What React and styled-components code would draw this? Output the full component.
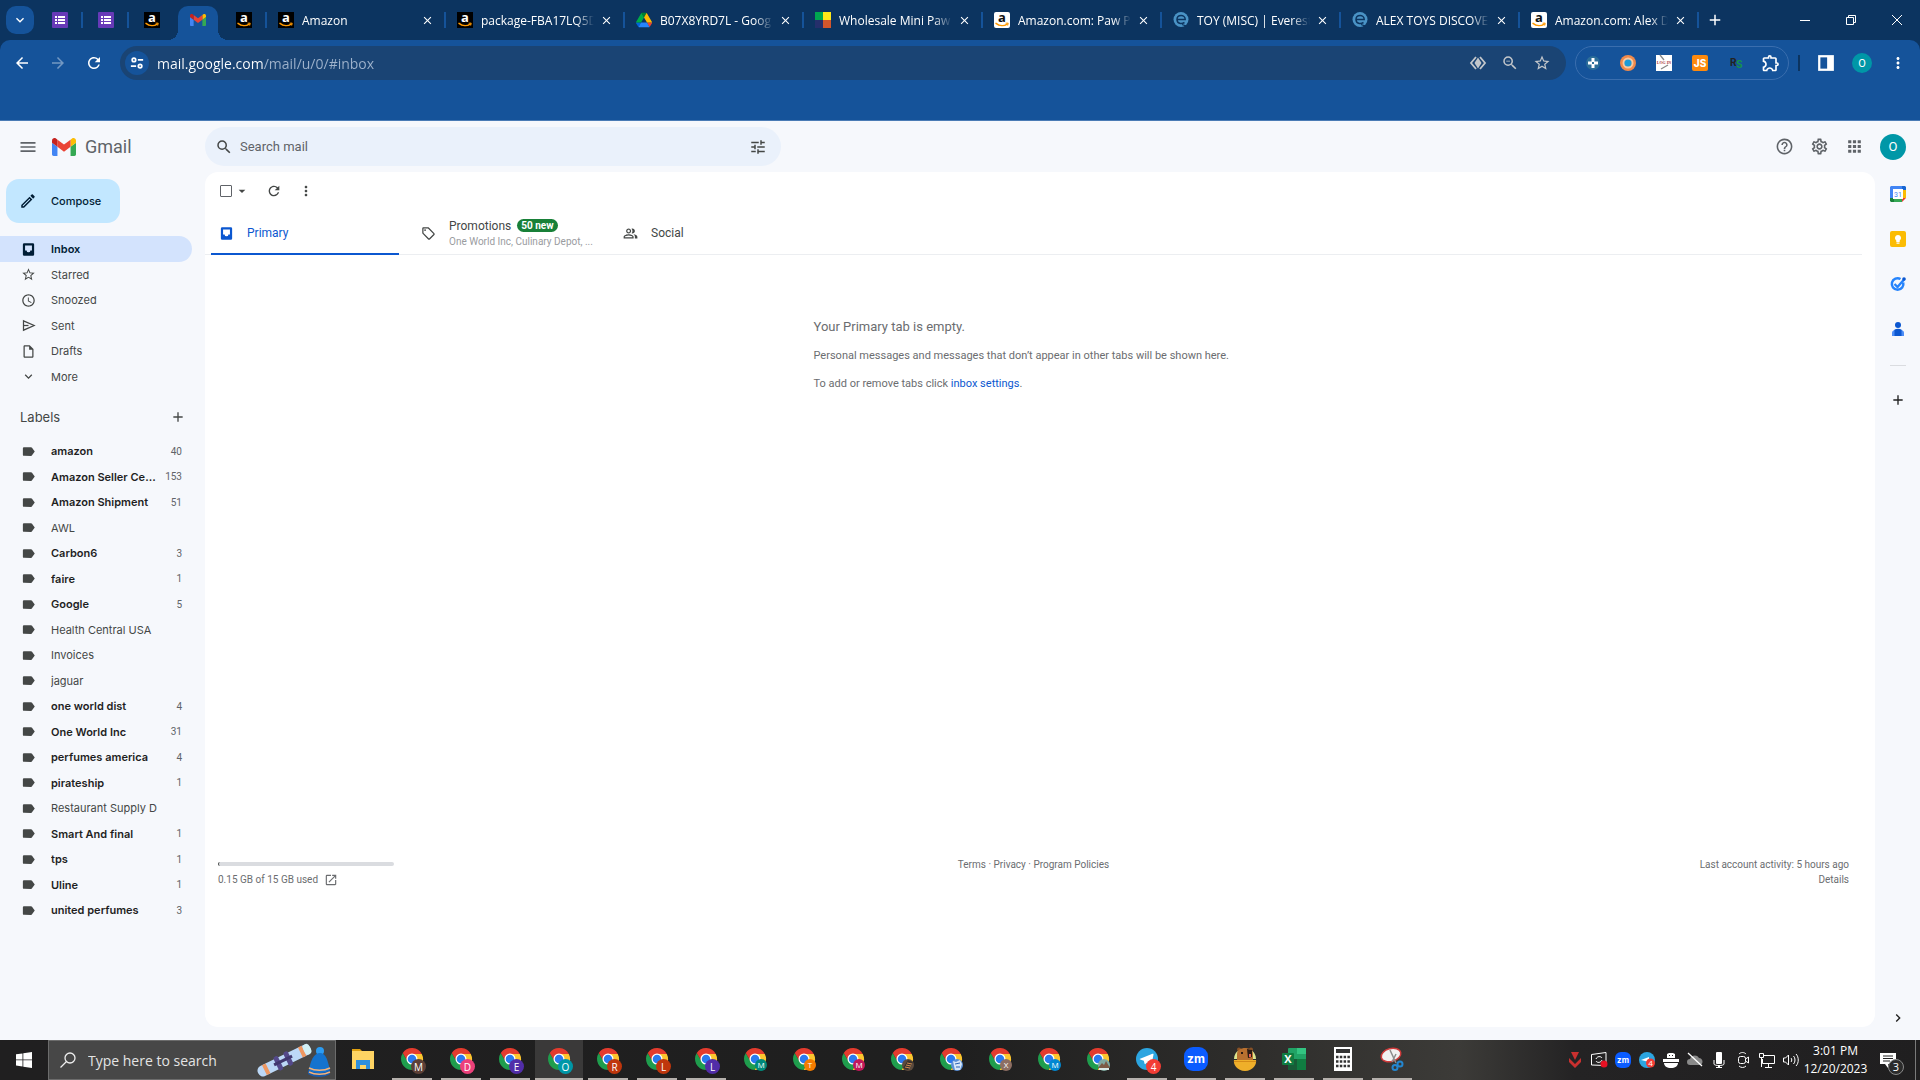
import React from 'react';
import styled, { createGlobalStyle, css } from 'styled-components';
import {
    MdMenu, MdSearch, MdTune, MdHelpOutline, MdOutlineSettings, MdApps, MdOutlineEdit,
    MdStarBorder, MdAccessTime, MdOutlineInsertDriveFile,
    MdExpandMore, MdAdd, MdLabel, MdRefresh, MdMoreVert, MdArrowDropDown, MdOutlineSell,
    MdOutlinePeopleAlt, MdOpenInNew, MdChevronRight, MdArrowBack, MdArrowForward, MdClose,
    MdZoomOut, MdOutlineExtension
} from 'react-icons/md';

const pinnedTabs = [
    { icon: 'forms', label: 'Form', line: true },
    { icon: 'forms', label: 'Form', line: true },
    { icon: 'amazon', label: 'Amazon' },
    { icon: 'gmail', label: 'Gmail', active: true },
    { icon: 'amazon', label: 'Amazon', line: true }
];

const browserTabs = [
    { icon: 'amazon', title: 'Amazon' },
    { icon: 'amazon', title: 'package-FBA17LQ5D' },
    { icon: 'drive', title: 'B07X8YRD7L - Goog' },
    { icon: 'squares', title: 'Wholesale Mini Paw' },
    { icon: 'amazonLight', title: 'Amazon.com: Paw Pa' },
    { icon: 'everest', title: 'TOY (MISC) | Everest' },
    { icon: 'everest', title: 'ALEX TOYS DISCOVE' },
    { icon: 'amazonLight', title: 'Amazon.com: Alex D' }
];

const folders = [
    { icon: <InboxIcon />, name: 'Inbox', active: true },
    { icon: <MdStarBorder />, name: 'Starred' },
    { icon: <MdAccessTime />, name: 'Snoozed' },
    { icon: <SendIcon />, name: 'Sent' },
    { icon: <MdOutlineInsertDriveFile />, name: 'Drafts' },
    { icon: <MdExpandMore />, name: 'More' }
];

const labels = [
    ['amazon', 40], ['Amazon Seller Central', 153], ['Amazon Shipment', 51], ['AWL'],
    ['Carbon6', 3], ['faire', 1], ['Google', 5], ['Health Central USA'], ['Invoices'],
    ['jaguar'], ['one world dist', 4], ['One World Inc', 31], ['perfumes america', 4],
    ['pirateship', 1], ['Restaurant Supply D'], ['Smart And final', 1], ['tps', 1],
    ['Uline', 1], ['united perfumes', 3]
];

const chromeWindows = [
    { letter: 'M', color: '#5d4037', open: true },
    { letter: 'D', color: '#ec407a', open: true },
    { letter: 'E', color: '#512da8', open: true },
    { letter: 'O', color: '#0097a7', open: true, active: true },
    { letter: 'R', color: '#bf360c', open: true },
    { letter: 'L', color: '#bf360c', open: true },
    { letter: 'L', color: '#512da8', open: true },
    { letter: 'M', color: '#00897b' },
    { letter: 'T', color: '#f57c00' },
    { letter: 'M', color: '#c2185b' },
    { picture: 'film', color: '#5b4a3d' },
    { picture: 'robot', color: '#5b8fd6' },
    { letter: 'X', color: '#8d6e63' },
    { letter: 'M', color: '#0288d1' },
    { picture: 'hill', color: '#7fa9a0' }
];

/* ---------- drawings ---------- */

function InboxIcon() {
    return (
        <svg viewBox="0 0 24 24" width="1em" height="1em" fill="currentColor">
            <path fillRule="evenodd" d="M5 2h14a2 2 0 0 1 2 2v16a2 2 0 0 1-2 2H5a2 2 0 0 1-2-2V4a2 2 0 0 1 2-2zM6.500 5.500v8H9a3 3 0 0 0 6 0h2.500v-8z" />
        </svg>
    );
}

function SendIcon() {
    return (
        <svg viewBox="0 0 24 24" width="1em" height="1em" fill="none" stroke="currentColor" strokeWidth="2">
            <path d="M4 4.500L21 12 4 19.500z" />
            <path d="M4 12h8" />
        </svg>
    );
}

function GmailLogo() {
    return (
        <svg viewBox="52 42 88 66">
            <path fill="#4285f4" d="M58 108h14V74L52 59v43c0 3.32 2.69 6 6 6" />
            <path fill="#34a853" d="M120 108h14c3.32 0 6-2.69 6-6V59l-20 15" />
            <path fill="#fbbc04" d="M120 48v26l20-15v-8c0-7.42-8.47-11.65-14.4-7.2" />
            <path fill="#ea4335" d="M72 74V48l24 18 24-18v26L96 92" />
            <path fill="#c5221f" d="M52 51v8l20 15V48l-5.6-4.2c-5.94-4.45-14.4-.22-14.4 7.2" />
        </svg>
    );
}

function AmazonIcon({ light }) {
    return (
        <svg viewBox="0 0 16 16">
            <rect width="16" height="16" rx={light ? 2 : 0} fill={light ? '#fff' : '#000'} />
            <text x="8" y="10" textAnchor="middle" fontFamily="Open Sans, sans-serif" fontWeight="700" fontSize="13" fill={light ? '#111' : '#fff'}>a</text>
            <path d="M2 11.4c3.4 2.7 8 2.9 11.2.7" fill="none" stroke="#f90" strokeWidth="1.5" strokeLinecap="round" />
            <path d="M11.6 11.2l2.6-.1-.5 2.5" fill="none" stroke="#f90" strokeWidth="1" />
        </svg>
    );
}

function Favicon({ name }) {
    switch (name) {
        case 'forms':
            return (
                <svg viewBox="0 0 16 16">
                    <rect width="16" height="16" rx="1" fill="#673ab7" />
                    <path fill="#fff" d="M3 4h2v2H3zM6 4h7v2H6zM3 7h2v2H3zM6 7h7v2H6zM3 10h2v2H3zM6 10h7v2H6z" />
                </svg>
            );
        case 'gmail':
            return <GmailLogo />;
        case 'drive':
            return (
                <svg viewBox="0 0 87 78">
                    <path fill="#0066da" d="M6.6 66.85l3.85 6.65c.8 1.4 1.95 2.5 3.3 3.3L27.5 53H0c0 1.55.4 3.1 1.2 4.5z" />
                    <path fill="#00ac47" d="M43.65 25L29.9 1.2c-1.35.8-2.5 1.9-3.3 3.3L1.2 48.5A9 9 0 0 0 0 53h27.5z" />
                    <path fill="#ea4335" d="M73.55 76.8c1.35-.8 2.5-1.9 3.3-3.3l1.6-2.75L86.1 57.5c.8-1.4 1.2-2.95 1.2-4.5H59.8l5.85 11.5z" />
                    <path fill="#00832d" d="M43.65 25L57.4 1.2C56.05.4 54.5 0 52.9 0H34.4c-1.6 0-3.15.45-4.5 1.2z" />
                    <path fill="#2684fc" d="M59.8 53H27.5L13.75 76.8c1.35.8 2.9 1.2 4.5 1.2h50.8c1.6 0 3.15-.45 4.5-1.2z" />
                    <path fill="#ffba00" d="M73.4 26.5l-12.7-22c-.8-1.4-1.95-2.5-3.3-3.3L43.65 25 59.8 53h27.45c0-1.55-.4-3.1-1.2-4.5z" />
                </svg>
            );
        case 'squares':
            return (
                <svg viewBox="0 0 16 16">
                    <path fill="#00a550" d="M0 0h8v8H0z" />
                    <path fill="#ffe81a" d="M8 0h8v8H8z" />
                    <path fill="#252f6b" d="M0 8h8v8H0z" />
                    <path fill="#d3562c" d="M8 8h8v8H8z" />
                </svg>
            );
        case 'everest':
            return (
                <svg viewBox="0 0 16 16">
                    <circle cx="8" cy="7.500" r="7.500" fill="#4a93c6" />
                    <path d="M4 7.500h8.200c0-5.300-8.200-5.300-8.200 0 0 4.300 4.500 4.800 7.500 3" fill="none" stroke="#0c3460" strokeWidth="1.500" />
                    <path d="M9 12.500l4.500 1.600" stroke="#0c3460" strokeWidth="1.200" />
                </svg>
            );
        default:
            return <AmazonIcon light={name === 'amazonLight'} />;
    }
}

function ChromeLogo() {
    return (
        <svg viewBox="0 0 48 48">
            <path fill="#fcc52e" d="M24 14H43.6A22 22 0 0 1 22.86 45.97L32.66 29Z" />
            <path fill="#1f9d4d" d="M32.66 29L22.86 45.97A22 22 0 0 1 5.54 12.03L15.34 29Z" />
            <path fill="#e33b2e" d="M15.34 29L5.54 12.03A22 22 0 0 1 43.6 14H24Z" />
            <circle cx="24" cy="24" r="11" fill="#fff" />
            <circle cx="24" cy="24" r="8.5" fill="#2a7af0" />
        </svg>
    );
}

function BadgePicture({ name }) {
    if (name === 'film') {
        return (
            <svg viewBox="0 0 12 12">
                <path d="M1 9L6 1l5 2-5 8z" fill="#3a322c" />
                <path d="M3 8l5 1M4 6l5 1M5 4l5 1" stroke="#d08a4e" />
            </svg>
        );
    }
    if (name === 'robot') {
        return (
            <svg viewBox="0 0 12 12">
                <path d="M2 2l3 1 4-2 2 4-2 6H4L3 7z" fill="#d6e6f8" />
                <path d="M4 5l5-1M5 8h4" stroke="#2a62b4" />
            </svg>
        );
    }
    return (
        <svg viewBox="0 0 12 12">
            <path d="M0 9l4-5 2 2 2-4 4 7z" fill="#7c5a44" />
            <path d="M1 10h10" stroke="#d9e8e4" strokeWidth="2" />
        </svg>
    );
}

function TelegramIcon() {
    return (
        <svg viewBox="0 0 24 24">
            <circle cx="12" cy="12" r="11" fill="#2ca5e0" />
            <path fill="#fff" d="M4.5 12l13-5.2c.8-.3 1.2.2 1 1l-2 9.4c-.2.9-.8 1-1.5.6l-3-2.3-1.6 1.5c-.4.4-.7.2-.8-.3l-.8-3-3.5-1.1z" />
        </svg>
    );
}

function ZoomIcon() {
    return (
        <svg viewBox="0 0 24 24">
            <rect width="24" height="24" rx="9" fill="#0b5cff" />
            <text x="12" y="16" textAnchor="middle" fontFamily="Inter, sans-serif" fontWeight="700" fontSize="12" fill="#fff">zm</text>
        </svg>
    );
}

function BearIcon() {
    return (
        <svg viewBox="0 0 24 24">
            <path d="M1 12c0-4 2-7 4-8h14c2 1 4 4 4 8z" fill="#dde68f" />
            <circle cx="6" cy="2.500" r="2" fill="#8a5226" />
            <circle cx="18" cy="2.500" r="2" fill="#8a5226" />
            <path d="M4 14V7c0-8 16-8 16 0v7z" fill="#b8702f" />
            <path d="M8 5h2v2H8z" fill="#2b1a14" />
            <path d="M14 2l5 1v7l-4 1z" fill="#2b1a14" />
            <path d="M16 7h2v3h-2z" fill="#e8625a" />
            <path d="M1 13h22c1 4-3 11-11 11S0 17 1 13z" fill="#efaf2a" />
            <path d="M1 14.500h22" stroke="#d58b18" />
        </svg>
    );
}

function FolderIcon() {
    return (
        <svg viewBox="0 0 24 24">
            <path d="M1 2h8l2 2H1z" fill="#e0a010" />
            <path d="M1 4h22v18H1z" fill="#ffd463" />
            <path d="M5 13h14v9h-4v-4H9v4H5z" fill="#2f8fdc" />
        </svg>
    );
}

function ExcelIcon() {
    return (
        <svg viewBox="0 0 24 24">
            <rect x="6" y="1" width="18" height="22" rx="1" fill="#21a366" />
            <path d="M6 12h9v11H6z" fill="#185c37" />
            <path d="M15 1h9v6h-9z" fill="#33c481" />
            <path d="M15 12h9v11h-9z" fill="#107c41" />
            <rect y="6" width="12" height="12" rx="1" fill="#107c41" />
            <text x="6" y="16" textAnchor="middle" fontFamily="Open Sans, sans-serif" fontWeight="700" fontSize="11" fill="#fff">X</text>
        </svg>
    );
}

function CalculatorIcon() {
    return (
        <svg viewBox="0 0 24 24">
            <path d="M3 0h18v24H3z" fill="#fff" />
            <path d="M5 2h14v4H5z" fill="#333" />
            <path d="M5 10h14M5 14.500h14M5 19h14" stroke="#333" strokeWidth="2.500" strokeDasharray="2.500 1.300" />
        </svg>
    );
}

function SnipIcon() {
    return (
        <svg viewBox="0 0 24 24">
            <ellipse cx="11" cy="8" rx="10" ry="6.500" fill="#f1f1f1" stroke="#cf3b3b" strokeWidth="1.500" transform="rotate(-15 11 8)" />
            <path d="M10 3l6 13M16 7l-4 8" stroke="#8c8c8c" strokeWidth="1.500" />
            <circle cx="20" cy="17" r="2.500" fill="none" stroke="#2486cf" strokeWidth="2" />
            <circle cx="15" cy="20.500" r="2.500" fill="none" stroke="#2486cf" strokeWidth="2" />
        </svg>
    );
}

function SnowArt() {
    return (
        <svg viewBox="0 0 74 36">
            <g transform="rotate(-26 27 18)">
                <rect x="-2" y="13" width="58" height="11" rx="5" fill="#bcd8f7" />
                <path d="M5 13h4v11H5zM45 13h4v11h-4z" fill="#ee9862" />
                <rect x="49" y="13" width="7" height="11" rx="4" fill="#d3f0f5" />
                <rect x="18" y="11" width="5" height="15" rx="2" fill="#54498a" />
                <rect x="29" y="11" width="5" height="15" rx="2" fill="#54498a" />
                <path d="M16 18h20" stroke="#41386f" strokeWidth="3" />
            </g>
            <circle cx="63" cy="9" r="4" fill="#2c9cf2" />
            <path d="M52 29c1-10 5-18 11-18s8 8 10 18c-6 4-15 4-21 0z" fill="#1473ce" />
            <path d="M51 28c6 4 16 4 22 0v4c-6 4-16 4-22 0z" fill="#1a5aa8" />
            <path d="M52 26c6 3 15 3 21 0M52 30c6 3 15 3 21 0" stroke="#f3b27a" strokeWidth="1.500" fill="none" />
        </svg>
    );
}

function CalendarIcon() {
    return (
        <svg viewBox="0 0 16 16">
            <path d="M1 0h11v4H4v8H0V1z" fill="#4285f4" />
            <path d="M12 0h3l1 1v3h-4z" fill="#1967d2" />
            <path d="M12 4h4v8h-4z" fill="#fbbc04" />
            <path d="M4 12h8v4H4z" fill="#34a853" />
            <path d="M0 12h4v4H1l-1-1z" fill="#188038" />
            <path d="M12 12h4l-4 4z" fill="#ea4335" />
            <path d="M3 3h10v10H3z" fill="#fff" />
            <text x="8" y="11" textAnchor="middle" fontFamily="Roboto, sans-serif" fontSize="7" fill="#4285f4">31</text>
        </svg>
    );
}

function KeepIcon() {
    return (
        <svg viewBox="0 0 16 16">
            <rect width="16" height="16" rx="2" fill="#fbbc04" />
            <path d="M8 4a3 3 0 0 0-1.700 5.500V11h3.400V9.500A3 3 0 0 0 8 4zM6.500 11.500h3v1.200h-3z" fill="#fff" />
        </svg>
    );
}

function TasksIcon() {
    return (
        <svg viewBox="0 0 16 16" fill="none">
            <path d="M13.200 6.500A5.800 5.800 0 1 1 10.500 3" stroke="#2684fc" strokeWidth="2.500" />
            <path d="M4.500 8l3 3 7-8" stroke="#2684fc" strokeWidth="2.400" />
            <circle cx="14" cy="3" r="1.800" fill="#0b57d0" />
        </svg>
    );
}

function ContactsIcon() {
    return (
        <svg viewBox="0 0 16 16">
            <circle cx="8" cy="4" r="3" fill="#0b57d0" />
            <path d="M2 15v-3c0-5 12-5 12 0v3z" fill="#4c8df6" />
            <path d="M4.500 15V8.700c2-1.300 5-1.300 7 0V15z" fill="#0b57d0" />
        </svg>
    );
}

/* ---------- parts ---------- */

function BrowserTabs() {
    return (
        <TabStrip>
            <TabSearch aria-label="Search tabs"><MdExpandMore /></TabSearch>
            {pinnedTabs.map((tab, i) => (
                <PinnedTab key={i} $active={tab.active} $line={tab.line} aria-label={tab.label}>
                    <Favicon name={tab.icon} />
                </PinnedTab>
            ))}
            {browserTabs.map((tab) => (
                <BrowserTab key={tab.title}>
                    <TabTitle><Favicon name={tab.icon} /><span>{tab.title}</span></TabTitle>
                    <TabClose aria-label="Close tab"><MdClose /></TabClose>
                </BrowserTab>
            ))}
            <NewTab aria-label="New tab"><MdAdd /></NewTab>
            <WindowControls>
                <button aria-label="Minimize"><svg viewBox="0 0 10 10"><path d="M0 5.500h10" /></svg></button>
                <button aria-label="Restore"><svg viewBox="0 0 10 10"><path d="M.5 2.500h7v7h-7zM2.500 2.500v-2h7v7h-2" /></svg></button>
                <button aria-label="Close"><svg viewBox="0 0 10 10"><path d="M0 0l10 10M10 0L0 10" /></svg></button>
            </WindowControls>
        </TabStrip>
    );
}

function AddressBar() {
    return (
        <ToolbarArea>
            <Toolbar>
                <NavButton aria-label="Back"><MdArrowBack /></NavButton>
                <NavButton aria-label="Forward" $dim><MdArrowForward /></NavButton>
                <NavButton aria-label="Reload"><MdRefresh /></NavButton>
                <Omnibox>
                    <SiteInfo aria-label="Site information">
                        <svg viewBox="0 0 16 16">
                            <circle cx="4.500" cy="4.500" r="2" /><path d="M9 4.500h6M1 11.500h6" /><circle cx="11.500" cy="11.500" r="2" />
                        </svg>
                    </SiteInfo>
                    <Url aria-label="Address" defaultValue="mail.google.com/mail/u/0/#inbox" />
                    <OmniButton aria-label="Install">
                        <svg viewBox="0 0 18 18">
                            <path d="M9 3.500l3.500 5.500L9 14.500 5.500 9z" fill="currentColor" />
                            <path d="M7 3L2 9l5 6M11 3l5 6-5 6" fill="none" stroke="currentColor" strokeWidth="1.800" />
                        </svg>
                    </OmniButton>
                    <OmniButton aria-label="Zoom"><MdZoomOut /></OmniButton>
                    <OmniButton aria-label="Bookmark"><MdStarBorder /></OmniButton>
                </Omnibox>
                <Extensions>
                    <button aria-label="Extension">
                        <svg viewBox="0 0 16 16"><circle cx="8" cy="8" r="7" fill="#2c6e99" /><path d="M6.500 3h3v3.500H13v3H9.500V13h-3V9.500H3v-3h3.500z" fill="#fff" /><path d="M7 7h2v2H7z" fill="#2c6e99" /></svg>
                    </button>
                    <button aria-label="Extension">
                        <svg viewBox="0 0 16 16"><circle cx="8" cy="8" r="8" fill="#f08a4b" /><circle cx="8" cy="8" r="5.500" fill="#f9c9a0" /><circle cx="8" cy="8" r="3.600" fill="#1c9bd8" /></svg>
                    </button>
                    <button aria-label="Log in">
                        <svg viewBox="0 0 16 16"><rect width="16" height="16" fill="#fff" /><path d="M4 0l4 5M5 14l7-4" stroke="#888" strokeWidth="1.300" /><text x="8" y="9" textAnchor="middle" fontFamily="Liberation Serif, serif" fontWeight="700" fontSize="4" fill="#a33">LOG IN</text></svg>
                    </button>
                    <button aria-label="JS">
                        <svg viewBox="0 0 16 16"><rect width="16" height="16" rx="2" fill="#ff8a0c" /><text x="8" y="12" textAnchor="middle" fontFamily="Inter, sans-serif" fontWeight="800" fontSize="10" fill="#fff">JS</text></svg>
                    </button>
                    <button aria-label="RS">
                        <svg viewBox="0 0 16 16" fontFamily="Inter, sans-serif" fontWeight="700" fontSize="10"><text x="2" y="11" fill="#222">R</text><text x="8" y="13" fill="#16924a">S</text></svg>
                    </button>
                    <button aria-label="Extensions"><MdOutlineExtension /></button>
                </Extensions>
                <ToolbarLine />
                <ProfileTools>
                    <button aria-label="Side panel">
                        <svg viewBox="0 0 16 16"><rect x="2" y="2" width="12" height="12" fill="none" stroke="#fff" strokeWidth="2" /><path d="M9 2h5v12H9z" fill="#fff" /></svg>
                    </button>
                    <Avatar $size={20}>O</Avatar>
                    <button aria-label="Menu"><MdMoreVert /></button>
                </ProfileTools>
            </Toolbar>
        </ToolbarArea>
    );
}

function Sidebar() {
    return (
        <Side>
            <Compose><MdOutlineEdit />Compose</Compose>
            <NavList>
                {folders.map((folder) => (
                    <NavItem key={folder.name}>
                        <NavLink href="#" $active={folder.active}>{folder.icon}<span>{folder.name}</span></NavLink>
                    </NavItem>
                ))}
            </NavList>
            <LabelsHead>
                <h2>Labels</h2>
                <button aria-label="Create new label"><MdAdd /></button>
            </LabelsHead>
            <NavList>
                {labels.map(([name, count]) => (
                    <NavItem key={name}>
                        <NavLink href="#" $bold={count > 0}><MdLabel /><span>{name}</span>{count && <small>{count}</small>}</NavLink>
                    </NavItem>
                ))}
            </NavList>
        </Side>
    );
}

function Mailbox() {
    return (
        <Panel>
            <Actions>
                <CheckInput type="checkbox" aria-label="Select" />
                <button aria-label="Select options"><MdArrowDropDown /></button>
                <button aria-label="Refresh"><MdRefresh /></button>
                <button aria-label="More"><MdMoreVert /></button>
            </Actions>
            <InboxTabs>
                <InboxTab $active><InboxIcon /><div>Primary</div></InboxTab>
                <InboxTab>
                    <MdOutlineSell />
                    <div>
                        <TabName>Promotions<NewBadge>50 new</NewBadge></TabName>
                        <Senders>One World Inc, Culinary Depot, ...</Senders>
                    </div>
                </InboxTab>
                <InboxTab><MdOutlinePeopleAlt /><div>Social</div></InboxTab>
            </InboxTabs>
            <Empty>
                <div>
                    <h1>Your Primary tab is empty.</h1>
                    <p>Personal messages and messages that don’t appear in other tabs will be shown here.</p>
                    <p>To add or remove tabs click <a href="#">inbox settings</a>.</p>
                </div>
            </Empty>
            <Footer>
                <div>
                    <Storage />
                    <StorageText>0.15 GB of 15 GB used<MdOpenInNew /></StorageText>
                </div>
                <Policies><a href="#">Terms</a> · <a href="#">Privacy</a> · <a href="#">Program Policies</a></Policies>
                <Activity>Last account activity: 5 hours ago<br /><a href="#">Details</a></Activity>
            </Footer>
        </Panel>
    );
}

function Taskbar() {
    return (
        <Bar>
            <StartButton aria-label="Start">
                <svg viewBox="0 0 16 16"><path fill="#fff" d="M0 2.300l6.500-.9v6.100H0zM7.300 1.300L16 0v7.500H7.300zM0 8.300h6.500v6.200L0 13.600zM7.300 8.300H16V16l-8.700-1.300z" /></svg>
            </StartButton>
            <TaskSearch>
                <svg viewBox="0 0 16 16" fill="none" stroke="#eee" strokeWidth="1.300"><circle cx="10" cy="6" r="5" /><path d="M6.500 9.500L.5 15.500" /></svg>
                <input placeholder="Type here to search" aria-label="Type here to search" />
                <SnowArt />
            </TaskSearch>
            <Apps>
                <App24 aria-label="File Explorer"><FolderIcon /></App24>
                {chromeWindows.map((win, i) => (
                    <App24 key={i} $open={win.open} $active={win.active} aria-label="Google Chrome">
                        <ChromeLogo />
                        <AppBadge $color={win.color} $big={win.open}>{win.letter || <BadgePicture name={win.picture} />}</AppBadge>
                    </App24>
                ))}
                <App24 $open aria-label="Telegram"><TelegramIcon /><AppBadge $color="#f23c34" $big>4</AppBadge></App24>
                <App24 $open aria-label="Zoom"><ZoomIcon /></App24>
                <App24 $open aria-label="Bear"><BearIcon /></App24>
                <App24 $open aria-label="Excel"><ExcelIcon /></App24>
                <App24 $open aria-label="Calculator"><CalculatorIcon /></App24>
                <App24 $open aria-label="Snipping Tool"><SnipIcon /></App24>
            </Apps>
            <Tray>
                <button aria-label="V"><svg viewBox="0 0 16 16" fill="#c9302f"><path d="M4 0h8L8 8z" /><path d="M2 6l6 6 6-6v4l-6 6-6-6z" /></svg></button>
                <button aria-label="Screen">
                    <svg viewBox="0 0 16 16" fill="none" stroke="#fff"><path d="M.5 2.500L15 .500v13L.5 13z" /><path d="M5 7c1-3 5-3 6-1M11 8c-1 3-5 3-6 1" /><circle cx="13" cy="12" r="3.500" fill="#e81123" stroke="none" /></svg>
                </button>
                <button aria-label="Zoom"><ZoomIcon /></button>
                <button aria-label="Telegram">
                    <svg viewBox="0 0 16 16"><circle cx="8" cy="8" r="8" fill="#2ca5e0" /><path d="M2 8l8-3v5z" fill="#fff" /><circle cx="11.500" cy="11" r="4.500" fill="#f23c34" /><text x="11.500" y="14" textAnchor="middle" fontFamily="Open Sans, sans-serif" fontSize="8" fill="#fff">4</text></svg>
                </button>
                <button aria-label="Bear">
                    <svg viewBox="0 0 16 16" fill="#fff"><path d="M4 6V2l2-1h4l2 1v4z" /><path d="M0 7h16v3H0zM1 11h14c0 3-3 5-7 5s-7-2-7-5z" /><path d="M6 3h1v1H6zM9 3h1v1H9z" fill="#222" /></svg>
                </button>
                <button aria-label="OneDrive"><svg viewBox="0 0 16 16"><path d="M3 13a3 3 0 0 1 0-6c1-4 7-5 9-1 4 0 5 6 1 7z" fill="#8a8a8a" /><path d="M1 1l14 13" stroke="#fff" strokeWidth="1.300" /></svg></button>
                <button aria-label="Microphone"><svg viewBox="0 0 16 16" fill="#fff"><rect x="5" width="6" height="12" rx="1" /><path d="M3 8v4c0 2 10 2 10 0V8" fill="none" stroke="#fff" /><path d="M7 13h2v2h2v1H5v-1h2z" /></svg></button>
                <button aria-label="Meet Now"><svg viewBox="0 0 16 16" fill="none" stroke="#fff"><rect x="3.500" y="4.500" width="7" height="7" rx="2" /><path d="M10.500 7l3-2v6l-3-2M4 2c2-2 5-2 7 0M4 14c2 2 5 2 7 0" /></svg></button>
                <button aria-label="Network"><svg viewBox="0 0 16 16" fill="none" stroke="#fff"><path d="M5 3.500h10.500v8H3.500V7M9.500 12v3M6 15.500h7M.5 1.500h4v4h-4zM2.500 6v9" /></svg></button>
                <button aria-label="Volume"><svg viewBox="0 0 16 16" fill="none" stroke="#fff"><path d="M.5 6h2l3-3v10l-3-3h-2zM8 6c1 1 1 3 0 4M10.500 4c2 2 2 6 0 8M13 2c3 3 3 9 0 12" /></svg></button>
            </Tray>
            <Clock><time>3:01 PM</time><time>12/20/2023</time></Clock>
            <Notices aria-label="Notifications">
                <svg viewBox="0 0 16 16"><path d="M0 1h16v11H8v4l-3-4H0z" fill="#fff" /><path d="M3 4h10M3 6.500h10M3 9h7" stroke="#222" /></svg>
                <NoticeCount>3</NoticeCount>
            </Notices>
        </Bar>
    );
}

function App() {
    return (
        <Screen>
            <GlobalStyle />
            <BrowserTabs />
            <AddressBar />
            <Gmail>
                <Header>
                    <Brand>
                        <button aria-label="Main menu"><MdMenu /></button>
                        <BrandLink href="#"><GmailLogo />Gmail</BrandLink>
                    </Brand>
                    <SearchBox>
                        <button aria-label="Search"><MdSearch /></button>
                        <input placeholder="Search mail" aria-label="Search mail" />
                        <button aria-label="Search options"><MdTune /></button>
                    </SearchBox>
                    <HeaderTools>
                        <button aria-label="Support"><MdHelpOutline /></button>
                        <button aria-label="Settings"><MdOutlineSettings /></button>
                        <button aria-label="Google apps"><MdApps /></button>
                        <Avatar $size={26}>O</Avatar>
                    </HeaderTools>
                </Header>
                <Content>
                    <Sidebar />
                    <Mailbox />
                    <Rail>
                        <button aria-label="Calendar"><CalendarIcon /></button>
                        <button aria-label="Keep"><KeepIcon /></button>
                        <button aria-label="Tasks"><TasksIcon /></button>
                        <button aria-label="Contacts"><ContactsIcon /></button>
                        <hr />
                        <button aria-label="Get add-ons"><MdAdd /></button>
                        <RailToggle aria-label="Hide side panel"><MdChevronRight /></RailToggle>
                    </Rail>
                </Content>
            </Gmail>
            <Taskbar />
        </Screen>
    );
}

export default App;

const GlobalStyle = createGlobalStyle`
    * {
        box-sizing: border-box;
    }
    body {
        margin: 0;
        font-family: Roboto, "Liberation Sans", sans-serif;
        font-size: 11px;
        color: #444746;
    }
    button {
        display: flex;
        align-items: center;
        justify-content: center;
        padding: 0;
        border: none;
        background: none;
        font: inherit;
        color: inherit;
        cursor: pointer;
    }
    input {
        padding: 0;
        border: none;
        outline: none;
        background: none;
        font: inherit;
        color: inherit;
    }
    a {
        color: inherit;
        text-decoration: none;
    }
    svg {
        display: block;
        flex: none;
        overflow: visible;
    }
`

const Screen = styled.div`
    display: flex;
    flex-direction: column;
    min-height: 100vh;
`

const TabStrip = styled.div`
    display: flex;
    height: 40px;
    padding-left: 6px;
    background: #0c3460;
    color: #fff;
    font-family: "Open Sans", sans-serif;
    font-size: 12px;
`

const TabSearch = styled.button`
    width: 28px;
    height: 28px;
    margin: 6px 3px 0 0;
    border-radius: 10px;
    background: #15539a;
    font-size: 16px;
`

const tabLine = css`
    &::after {
        content: '';
        position: absolute;
        right: 0;
        top: 12px;
        width: 2px;
        height: 16px;
        background: #15539a;
    }
`

const PinnedTab = styled.button`
    position: relative;
    flex: none;
    width: 46px;
    height: 40px;

    svg {
        width: 16px;
        height: 16px;
    }

    ${(props) => props.$line && tabLine}

    ${(props) => props.$active && css`
        width: 40px;
        height: 34px;
        margin: 6px 3px 0;
        padding-bottom: 6px;
        border-radius: 10px 10px 0 0;
        background: #15539a;

        &::before,
        &::after {
            content: '';
            position: absolute;
            bottom: 0;
            width: 10px;
            height: 10px;
        }
        &::before {
            right: 100%;
            background: radial-gradient(circle at 0 0, transparent 10px, #15539a 10px);
        }
        &::after {
            left: 100%;
            background: radial-gradient(circle at 100% 0, transparent 10px, #15539a 10px);
        }
    `}
`

const BrowserTab = styled.div`
    position: relative;
    display: flex;
    align-items: center;
    flex: 0 1 179px;
    min-width: 0;
    padding: 0 11px;
    ${tabLine}
`

const TabTitle = styled.button`
    flex: 1;
    min-width: 0;
    gap: 8px;
    justify-content: flex-start;

    svg {
        width: 16px;
        height: 16px;
    }
    span {
        flex: 1;
        overflow: hidden;
        text-align: left;
        white-space: nowrap;
        mask-image: linear-gradient(90deg, #000 84%, transparent);
    }
`

const TabClose = styled.button`
    width: 16px;
    margin-left: 4px;
    font-size: 13px;
`

const NewTab = styled.button`
    width: 32px;
    font-size: 18px;
`

const WindowControls = styled.div`
    display: flex;
    margin-left: auto;

    button {
        width: 46px;
    }
    svg {
        width: 10px;
        height: 10px;
        fill: none;
        stroke: #fff;
    }
`

const ToolbarArea = styled.div`
    background: #0c3460;
`

const Toolbar = styled.div`
    display: flex;
    align-items: flex-start;
    height: 81px;
    padding: 6px 4px 0;
    border-bottom: 1px solid #4a7bb5;
    border-radius: 10px 10px 0 0;
    background: #15539a;
    color: #fff;
    font-family: "Open Sans", sans-serif;
`

const NavButton = styled.button`
    width: 36px;
    height: 34px;
    font-size: 18px;
    opacity: ${(props) => (props.$dim ? 0.4 : 1)};
`

const Omnibox = styled.div`
    display: flex;
    align-items: center;
    flex: 1;
    height: 34px;
    margin-left: 8px;
    padding: 0 8px 0 5px;
    border-radius: 17px;
    background: #1a4474;
`

const SiteInfo = styled.button`
    width: 24px;
    height: 24px;
    border-radius: 50%;
    background: #15539a;

    svg {
        width: 14px;
        height: 14px;
        fill: none;
        stroke: #fff;
        stroke-width: 2;
    }
`

const Url = styled.input`
    flex: 1;
    margin-left: 8px;
    font-size: 14px;
    background: linear-gradient(90deg, #fff 107px, #9fb3cc 107px);
    background-clip: text;
    -webkit-text-fill-color: transparent;
`

const OmniButton = styled.button`
    width: 32px;
    color: #c3c7cb;
    font-size: 18px;

    svg {
        width: 18px;
        height: 18px;
    }
`

const Extensions = styled.div`
    display: flex;
    align-items: center;
    height: 34px;
    margin-left: 9px;
    border: 1px solid #3a6eae;
    border-radius: 17px;

    button {
        width: 36px;
    }
    button:first-child,
    button:last-child {
        width: 34px;
    }
    svg {
        width: 16px;
        height: 16px;
    }
    button:last-child svg {
        width: 20px;
        height: 20px;
    }
`

const ToolbarLine = styled.div`
    width: 2px;
    height: 16px;
    margin: 9px 8px 0 9px;
    background: #0c3460;
`

const ProfileTools = styled.div`
    display: flex;
    align-items: center;
    height: 34px;

    > button {
        width: 36px;
    }
    svg {
        width: 18px;
        height: 18px;
    }
    > button:nth-child(2) {
        width: 20px;
        margin: 0 8px;
    }
`

const Avatar = styled.button.attrs({ 'aria-label': 'Account O' })`
    width: ${(props) => props.$size}px;
    height: ${(props) => props.$size}px;
    border-radius: 50%;
    background: #0097a7;
    color: #fff;
    font-size: ${(props) => (props.$size > 20 ? 13 : 11)}px;
    font-family: Roboto, sans-serif;
`

const Gmail = styled.div`
    display: flex;
    flex-direction: column;
    flex: 1;
    background: #f6f8fc;
`

const Header = styled.header`
    display: flex;
    align-items: center;
    height: 51px;
    padding-right: 14px;
`

const Brand = styled.div`
    display: flex;
    align-items: center;
    width: 205px;
    padding-left: 18px;

    > button {
        font-size: 20px;
        color: #5f6368;
    }
`

const BrandLink = styled.a`
    display: flex;
    align-items: center;
    gap: 9px;
    margin-left: 14px;
    font-size: 18px;
    color: #5f6368;

    svg {
        width: 24px;
        height: 18px;
    }
`

const SearchBox = styled.div`
    display: flex;
    align-items: center;
    flex: 0 1 576px;
    height: 39px;
    padding: 0 10px;
    border-radius: 20px;
    background: #eaf1fb;
    font-size: 13px;

    button {
        width: 18px;
        font-size: 18px;
    }
    button:last-child {
        width: 26px;
    }
    input {
        flex: 1;
        margin-left: 7px;
    }
    input::placeholder {
        color: #5f6368;
        opacity: 1;
    }
`

const HeaderTools = styled.div`
    display: flex;
    align-items: center;
    margin-left: auto;
    color: #5f6368;
    font-size: 19px;

    > button {
        width: 35px;
    }
    > button:last-child {
        width: 26px;
        margin-left: 8px;
    }
`

const Content = styled.div`
    display: flex;
    flex: 1;
    padding-bottom: 13px;
`

const Side = styled.nav`
    flex: none;
    width: 205px;
    padding-top: 7px;
    font-family: Inter, sans-serif;
`

const Compose = styled.button`
    justify-content: flex-start;
    gap: 14px;
    width: 114px;
    height: 44px;
    margin: 0 0 13px 6px;
    padding-left: 13px;
    border-radius: 13px;
    background: #c2e7ff;
    color: #001d35;
    font-weight: 500;

    svg {
        font-size: 18px;
    }
`

const NavList = styled.ul`
    margin: 0;
    padding: 0 13px 0 0;
    list-style: none;
`

/* rows average 25.5px, so they alternate to stay on whole pixels */
const NavItem = styled.li`
    height: 26px;

    &:nth-child(even) {
        height: 25px;
    }
`

const NavLink = styled.a`
    display: flex;
    align-items: center;
    height: 100%;
    padding: 0 10px 0 21px;
    border-radius: 0 13px 13px 0;
    background: ${(props) => (props.$active ? '#d3e3fd' : 'none')};
    color: ${(props) => (props.$active ? '#001d35' : props.$bold ? '#1f1f1f' : '#444746')};
    font-weight: ${(props) => (props.$active || props.$bold ? 600 : 400)};

    svg {
        font-size: 15px;
        color: ${(props) => (props.$active ? '#001d35' : '#444746')};
    }
    span {
        flex: 1;
        min-width: 0;
        margin: 0 8px 0 15px;
        overflow: hidden;
        white-space: nowrap;
        text-overflow: ellipsis;
    }
    small {
        font-family: Roboto, sans-serif;
        font-size: 10px;
        font-weight: 400;
        color: #5f6368;
    }
`

const LabelsHead = styled.div`
    display: flex;
    align-items: center;
    justify-content: space-between;
    height: 49px;
    margin: 0 19px 0 20px;
    padding-top: 7px;

    h2 {
        margin: 0;
        font-size: 13px;
        font-weight: 400;
    }
    button {
        font-size: 16px;
    }
`

const Panel = styled.main`
    display: flex;
    flex-direction: column;
    flex: 1;
    border-radius: 13px;
    background: #fff;
`

const Actions = styled.div`
    display: flex;
    align-items: center;
    height: 38px;
    padding-left: 15px;

    button {
        width: 16px;
        font-size: 16px;
    }
    button:nth-of-type(2) {
        margin-left: 16px;
    }
    button:nth-of-type(3) {
        margin-left: 16px;
    }
`

const CheckInput = styled.input`
    width: 12px;
    height: 12px;
    margin: 0 2px 0 0;
    border: 1px solid #5f6368;
    border-radius: 1px;
    appearance: none;
`

const InboxTabs = styled.div`
    display: flex;
    height: 45px;
    margin-right: 13px;
    padding-left: 6px;
    border-bottom: 1px solid #eceef1;
`

const InboxTab = styled.button`
    position: relative;
    justify-content: flex-start;
    gap: 13px;
    width: 188px;
    margin-right: 14px;
    padding: 2px 0 0 8px;
    text-align: left;
    font-size: 12px;
    color: ${(props) => (props.$active ? '#0b57d0' : '#444746')};

    > svg {
        font-size: 15px;
    }

    ${(props) => props.$active && css`
        &::after {
            content: '';
            position: absolute;
            left: 0;
            right: 0;
            bottom: -1px;
            height: 2px;
            background: #0b57d0;
        }
    `}
`

const TabName = styled.div`
    display: flex;
    align-items: center;
    gap: 6px;
`

const NewBadge = styled.span`
    padding: 0 4px;
    border-radius: 7px;
    background: #188038;
    color: #fff;
    font-size: 10px;
    font-weight: 700;
    line-height: 13px;
`

const Senders = styled.div`
    margin-top: 2px;
    font-size: 10px;
    line-height: 13px;
    color: #9a9c9f;
    white-space: nowrap;
`

const Empty = styled.div`
    display: flex;
    justify-content: center;
    flex: 1;
    min-height: 602px;
    max-height: 602px;
    padding: 62px 20px 0 0;
    color: #6b6d70;

    > div {
        min-width: 433px;
    }
    h1 {
        margin: 0 0 12px;
        font-size: 13px;
        line-height: 20px;
        font-weight: 400;
    }
    p {
        margin: 0 0 14px;
        line-height: 14px;
    }
    a {
        color: #0b57d0;
    }
`

const Footer = styled.footer`
    display: grid;
    grid-template-columns: 1fr auto 1fr;
    align-items: start;
    padding: 0 26px 0 13px;
    font-size: 10px;
    line-height: 15px;
    color: #6b6d70;
`

const Storage = styled.div`
    width: 176px;
    height: 4px;
    margin: 5px 0 6px;
    border-left: 1px solid #444746;
    border-radius: 2px;
    background: #dadce0;
`

const StorageText = styled.div`
    display: flex;
    align-items: center;
    gap: 6px;

    svg {
        font-size: 14px;
    }
`

const Policies = styled.div`
    text-align: center;
`

const Activity = styled.div`
    text-align: right;
`

const Rail = styled.aside`
    display: flex;
    flex-direction: column;
    align-items: center;
    width: 45px;
    padding-top: 13px;

    button {
        height: 18px;
        margin-bottom: 27px;
        color: #1f1f1f;
    }
    svg {
        width: 16px;
        height: 16px;
    }
    hr {
        width: 16px;
        margin: 0 0 25px;
        border: none;
        border-top: 1px solid #dadce0;
    }
`

const RailToggle = styled.button`
    && {
        margin: auto 0 0;
    }
`

const Bar = styled.div`
    display: flex;
    align-items: stretch;
    height: 40px;
    background: linear-gradient(90deg, #201f20, #1f1f1f 50%, #2e2d2b 65%, #3c3b38 76%, #242324 82%, #201f20);
    color: #fff;
    font-family: "Open Sans", sans-serif;
`

const StartButton = styled.button`
    width: 48px;

    svg {
        width: 16px;
        height: 16px;
    }
`

const TaskSearch = styled.div`
    display: flex;
    align-items: center;
    width: 288px;
    padding: 0 4px 0 11px;
    border: 1px solid #6c6c6c;
    background: #474747;
    font-size: 14px;

    svg:first-child {
        width: 16px;
        height: 16px;
    }
    svg:last-child {
        width: 74px;
        height: 36px;
    }
    input {
        flex: 1;
        min-width: 0;
        margin-left: 12px;
    }
    input::placeholder {
        color: #e4e4e4;
        opacity: 1;
    }
`

const Apps = styled.div`
    display: flex;
    gap: 1px;
    padding-left: 3px;
`

const App24 = styled.button`
    position: relative;
    width: 48px;
    border-bottom: 2px solid transparent;
    background: ${(props) => (props.$active ? '#3a3939' : 'none')};

    > svg {
        width: 24px;
        height: 24px;
    }

    &::after {
        content: '';
        position: absolute;
        left: ${(props) => (props.$active ? 0 : 4)}px;
        right: ${(props) => (props.$active ? 0 : 4)}px;
        bottom: -2px;
        height: 2px;
        background: ${(props) => (props.$open ? '#b5b0ac' : 'none')};
    }
`

const AppBadge = styled.span`
    position: absolute;
    right: ${(props) => (props.$big ? 10 : 12)}px;
    bottom: ${(props) => (props.$big ? 4 : 7)}px;
    display: flex;
    align-items: center;
    justify-content: center;
    width: ${(props) => (props.$big ? 15 : 12)}px;
    height: ${(props) => (props.$big ? 15 : 12)}px;
    border-radius: 50%;
    background: ${(props) => props.$color};
    color: #fff;
    font-size: ${(props) => (props.$big ? 10 : 8)}px;
    line-height: 12px;

    svg {
        width: 12px;
        height: 12px;
    }
`

const Tray = styled.div`
    display: flex;
    align-items: center;
    margin-left: auto;

    button {
        width: 24px;
    }
    svg {
        width: 16px;
        height: 16px;
    }
`

const Clock = styled.div`
    display: flex;
    flex-direction: column;
    align-items: center;
    justify-content: center;
    width: 65px;
    font-size: 12px;
    line-height: 18px;
`

const Notices = styled.button`
    position: relative;
    justify-content: flex-start;
    width: 48px;
    margin-right: 4px;
    padding-left: 12px;
    border-right: 1px solid #7a7a7a;

    svg {
        width: 16px;
        height: 16px;
    }
`

const NoticeCount = styled.span`
    position: absolute;
    left: 20px;
    top: 19px;
    width: 16px;
    height: 16px;
    border: 1px solid #8a8a8a;
    border-radius: 50%;
    background: #2b2b2b;
    font-size: 11px;
    line-height: 14px;
`
